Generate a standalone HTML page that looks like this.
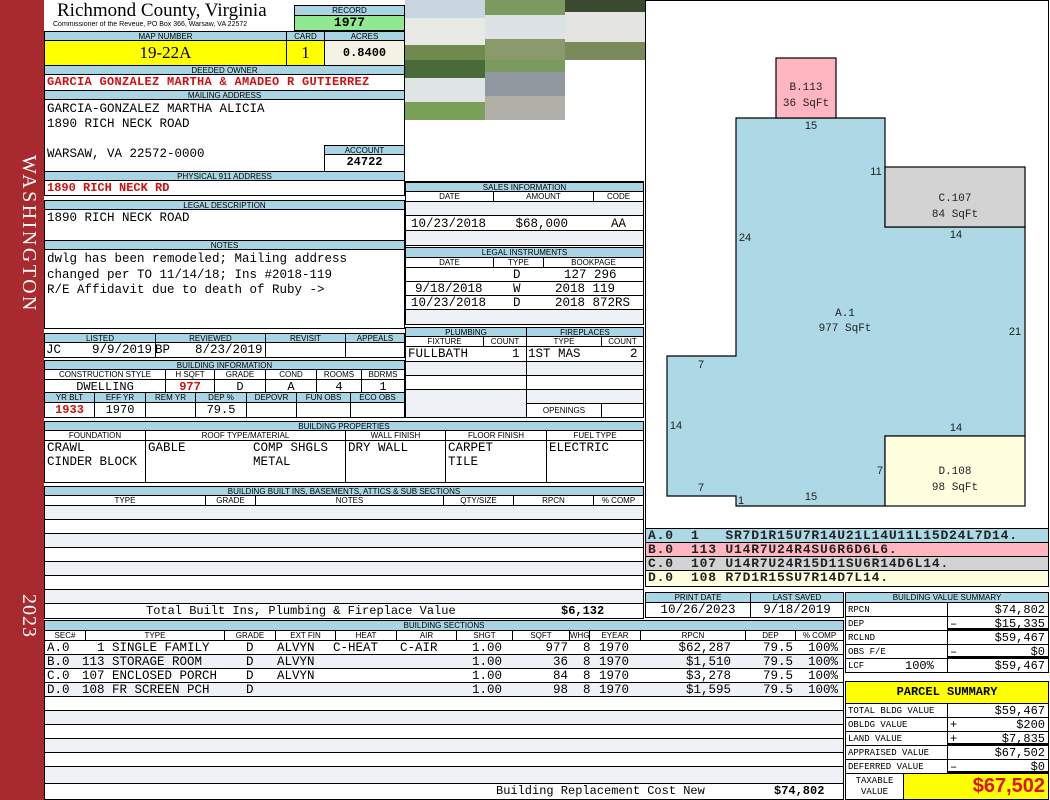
<!DOCTYPE html>
<html><head><meta charset="utf-8"><style>
body{margin:0;width:1050px;height:800px;background:#fff;position:relative;overflow:hidden;font-family:"Liberation Mono",monospace}
div,span.p{position:absolute;box-sizing:border-box;overflow:hidden;white-space:nowrap}
.h{background:#a9d4e4;border:1px solid #000;font:8px/9px "Liberation Sans",sans-serif;text-align:center;color:#000}
.v{border:1px solid #000;font-size:12px;line-height:14px;padding-left:2px;color:#000}
.c{text-align:center;padding-left:0}
.r{text-align:right;padding-right:3px}
.red{color:#d01010;font-weight:bold}
.alt{background:#eef2f6}
.t{font-size:12.5px;line-height:14px}
.sg{position:absolute;left:950px;font-size:12px;line-height:14px}
</style></head><body>
<div style="left:0;top:0;width:44px;height:800px;background:#a8292e"></div>
<div style="left:8px;top:155px;width:32px;height:175px;color:#fff;font:20px 'Liberation Serif',serif;writing-mode:vertical-rl;letter-spacing:2.5px">WASHINGTON</div>
<div style="left:8px;top:594px;width:32px;height:45px;color:#fff;font:20px 'Liberation Serif',serif;writing-mode:vertical-rl;letter-spacing:1px">2023</div>

<div style="left:57px;top:1px;font:19px/20px 'Liberation Serif',serif">Richmond County, Virginia</div>
<div style="left:53px;top:21px;font:7px/8px 'Liberation Sans',sans-serif">Commissioner of the Reveue, PO Box 366, Warsaw, VA 22572</div>
<div class="h" style="left:294px;top:5px;width:111px;height:11px">RECORD</div>
<div class="v c" style="left:294px;top:15px;width:111px;height:16px;background:#90e890;font-weight:bold;font-size:13px">1977</div>
<div class="h" style="left:44px;top:31px;width:243px;height:10px">MAP NUMBER</div>
<div class="h" style="left:286px;top:31px;width:39px;height:10px">CARD</div>
<div class="h" style="left:324px;top:31px;width:81px;height:10px">ACRES</div>
<div class="v c" style="left:44px;top:40px;width:243px;height:26px;background:#ffff00;font:17px/24px 'Liberation Serif',serif">19-22A</div>
<div class="v c" style="left:286px;top:40px;width:39px;height:26px;background:#ffff00;font:17px/24px 'Liberation Serif',serif">1</div>
<div class="v c" style="left:324px;top:40px;width:81px;height:26px;background:#f4f2e4;font-weight:bold;line-height:24px">0.8400</div>
<div class="h" style="left:44px;top:65px;width:361px;height:10px">DEEDED OWNER</div>
<div class="v red" style="left:44px;top:74px;width:361px;height:17px;font-size:12px;letter-spacing:0.3px">GARCIA GONZALEZ MARTHA &amp; AMADEO R GUTIERREZ</div>
<div class="h" style="left:44px;top:90px;width:361px;height:10px">MAILING ADDRESS</div>
<div class="v" style="left:44px;top:99px;width:361px;height:73px;line-height:15px;white-space:pre;padding-top:2px;font-size:12.5px">GARCIA-GONZALEZ MARTHA ALICIA
1890 RICH NECK ROAD

WARSAW, VA 22572-0000</div>
<div class="h" style="left:324px;top:145px;width:81px;height:10px">ACCOUNT</div>
<div class="v c" style="left:324px;top:154px;width:81px;height:18px;font-weight:bold;background:#fff">24722</div>
<div class="h" style="left:44px;top:171px;width:361px;height:10px">PHYSICAL 911 ADDRESS</div>
<div class="v red" style="left:44px;top:180px;width:361px;height:16px">1890 RICH NECK RD</div>
<div class="h" style="left:44px;top:200px;width:361px;height:10px">LEGAL DESCRIPTION</div>
<div class="v" style="left:44px;top:209px;width:361px;height:32px;line-height:17px;font-size:12.5px">1890 RICH NECK ROAD</div>
<div class="h" style="left:44px;top:240px;width:361px;height:10px">NOTES</div>
<div class="v" style="left:44px;top:249px;width:361px;height:80px;line-height:15.5px;white-space:pre;padding-top:2px;font-size:12.5px">dwlg has been remodeled; Mailing address
changed per TO 11/14/18; Ins #2018-119
R/E Affidavit due to death of Ruby -&gt;</div>

<div style="left:405px;top:0;width:80px;height:60px;background:linear-gradient(#c8d4de 0 30%,#e8e8e4 30% 75%,#6f8a4c 75%)"></div>
<div style="left:485px;top:0;width:80px;height:60px;background:linear-gradient(#7a9a60 0 25%,#dde2e6 25% 65%,#8a9a6a 65%)"></div>
<div style="left:565px;top:0;width:80px;height:60px;background:linear-gradient(#3a4a30 0 20%,#e4e4e0 20% 70%,#7a8a5a 70%)"></div>
<div style="left:405px;top:60px;width:80px;height:60px;background:linear-gradient(#4a6a3a 0 30%,#dfe4e4 30% 70%,#7aa05a 70%)"></div>
<div style="left:485px;top:60px;width:80px;height:60px;background:linear-gradient(#7a9a60 0 20%,#9098a0 20% 60%,#b0b0a8 60%)"></div>

<div style="left:405px;top:181px;width:239px;height:67px;border:1px solid #000"></div>
<div class="h" style="left:405px;top:182px;width:239px;height:10px">SALES INFORMATION</div>
<div class="h" style="left:405px;top:191px;width:89px;height:11px;background:#fff">DATE</div>
<div class="h" style="left:493px;top:191px;width:101px;height:11px;background:#fff">AMOUNT</div>
<div class="h" style="left:593px;top:191px;width:51px;height:11px;background:#fff">CODE</div>
<div class="v alt" style="left:405px;top:201px;width:239px;height:15px"></div>
<div class="v" style="left:405px;top:215px;width:239px;height:16px"></div>
<div class="t" style="left:411px;top:217px">10/23/2018</div>
<div class="t" style="left:500px;top:217px;width:68px;text-align:right">$68,000</div>
<div class="t" style="left:611px;top:217px">AA</div>
<div class="v alt" style="left:405px;top:230px;width:239px;height:16px"></div>
<div class="h" style="left:405px;top:247px;width:239px;height:11px">LEGAL INSTRUMENTS</div>
<div class="h" style="left:405px;top:257px;width:89px;height:11px;background:#fff">DATE</div>
<div class="h" style="left:493px;top:257px;width:51px;height:11px;background:#fff">TYPE</div>
<div class="h" style="left:543px;top:257px;width:101px;height:11px;background:#fff">BOOKPAGE</div>
<div class="v" style="left:405px;top:267px;width:239px;height:15px"></div>
<div class="v" style="left:405px;top:281px;width:239px;height:15px"></div>
<div class="v" style="left:405px;top:295px;width:239px;height:15px"></div>
<div class="v alt" style="left:405px;top:309px;width:239px;height:16px"></div>
<div class="t" style="left:513px;top:268px">D</div><div class="t" style="left:564px;top:268px">127 296</div>
<div class="t" style="left:415px;top:282px">9/18/2018</div><div class="t" style="left:513px;top:282px">W</div><div class="t" style="left:555px;top:282px">2018 119</div>
<div class="t" style="left:411px;top:296px">10/23/2018</div><div class="t" style="left:513px;top:296px">D</div><div class="t" style="left:555px;top:296px">2018 872RS</div>

<div class="h" style="left:44px;top:333px;width:112px;height:10px">LISTED</div>
<div class="h" style="left:155px;top:333px;width:111px;height:10px">REVIEWED</div>
<div class="h" style="left:265px;top:333px;width:81px;height:10px">REVISIT</div>
<div class="h" style="left:345px;top:333px;width:60px;height:10px">APPEALS</div>
<div class="v" style="left:44px;top:342px;width:112px;height:16px"></div>
<div class="v" style="left:155px;top:342px;width:111px;height:16px"></div>
<div class="v" style="left:265px;top:342px;width:81px;height:16px"></div>
<div class="v" style="left:345px;top:342px;width:60px;height:16px"></div>
<div class="t" style="left:46px;top:343px">JC</div><div class="t" style="left:92px;top:343px">9/9/2019</div>
<div class="t" style="left:155px;top:343px">BP</div><div class="t" style="left:195px;top:343px">8/23/2019</div>
<div class="h" style="left:44px;top:360px;width:361px;height:10px">BUILDING INFORMATION</div>
<div class="h" style="left:44px;top:369px;width:122px;height:11px;background:#fff">CONSTRUCTION STYLE</div>
<div class="h" style="left:165px;top:369px;width:50px;height:11px;background:#fff">H SQFT</div>
<div class="h" style="left:214px;top:369px;width:52px;height:11px;background:#fff">GRADE</div>
<div class="h" style="left:265px;top:369px;width:52px;height:11px;background:#fff">COND</div>
<div class="h" style="left:316px;top:369px;width:46px;height:11px;background:#fff">ROOMS</div>
<div class="h" style="left:361px;top:369px;width:44px;height:11px;background:#fff">BDRMS</div>
<div class="v c" style="left:44px;top:379px;width:122px;height:14px">DWELLING</div>
<div class="v c red" style="left:165px;top:379px;width:50px;height:14px">977</div>
<div class="v c" style="left:214px;top:379px;width:52px;height:14px">D</div>
<div class="v c" style="left:265px;top:379px;width:52px;height:14px">A</div>
<div class="v c" style="left:316px;top:379px;width:46px;height:14px">4</div>
<div class="v c" style="left:361px;top:379px;width:44px;height:14px">1</div>
<div class="h" style="left:44px;top:392px;width:51px;height:11px">YR BLT</div>
<div class="h" style="left:94px;top:392px;width:52px;height:11px">EFF YR</div>
<div class="h" style="left:145px;top:392px;width:51px;height:11px">REM YR</div>
<div class="h" style="left:195px;top:392px;width:52px;height:11px">DEP %</div>
<div class="h" style="left:246px;top:392px;width:51px;height:11px">DEPOVR</div>
<div class="h" style="left:296px;top:392px;width:55px;height:11px">FUN OBS</div>
<div class="h" style="left:350px;top:392px;width:55px;height:11px">ECO OBS</div>
<div class="v c red" style="left:44px;top:402px;width:51px;height:16px">1933</div>
<div class="v c" style="left:94px;top:402px;width:52px;height:16px">1970</div>
<div class="v" style="left:145px;top:402px;width:51px;height:16px"></div>
<div class="v c" style="left:195px;top:402px;width:52px;height:16px">79.5</div>
<div class="v" style="left:246px;top:402px;width:51px;height:16px"></div>
<div class="v" style="left:296px;top:402px;width:55px;height:16px"></div>
<div class="v" style="left:350px;top:402px;width:55px;height:16px"></div>

<div class="h" style="left:405px;top:327px;width:122px;height:10px">PLUMBING</div>
<div class="h" style="left:526px;top:327px;width:118px;height:10px">FIREPLACES</div>
<div class="h" style="left:405px;top:336px;width:79px;height:11px;background:#fff">FIXTURE</div>
<div class="h" style="left:483px;top:336px;width:44px;height:11px;background:#fff">COUNT</div>
<div class="h" style="left:526px;top:336px;width:76px;height:11px;background:#fff">TYPE</div>
<div class="h" style="left:601px;top:336px;width:43px;height:11px;background:#fff">COUNT</div>
<div class="v" style="left:405px;top:346px;width:122px;height:16px"></div>
<div class="v" style="left:526px;top:346px;width:118px;height:16px"></div>
<div class="t" style="left:408px;top:347px">FULLBATH</div><div class="t" style="left:512px;top:347px">1</div>
<div class="t" style="left:528px;top:347px">1ST MAS</div><div class="t" style="left:630px;top:347px">2</div>
<div class="v alt" style="left:405px;top:361px;width:122px;height:15px"></div>
<div class="v alt" style="left:526px;top:361px;width:118px;height:15px"></div>
<div class="v" style="left:405px;top:375px;width:122px;height:15px"></div>
<div class="v" style="left:526px;top:375px;width:118px;height:15px"></div>
<div class="v alt" style="left:405px;top:389px;width:122px;height:29px"></div>
<div class="v alt" style="left:526px;top:389px;width:118px;height:15px"></div>
<div class="h" style="left:526px;top:403px;width:76px;height:15px;background:#fff;line-height:13px">OPENINGS</div>
<div class="v" style="left:601px;top:403px;width:43px;height:15px"></div>

<div class="h" style="left:44px;top:421px;width:600px;height:10px">BUILDING PROPERTIES</div>
<div class="h" style="left:44px;top:430px;width:102px;height:11px;background:#fff">FOUNDATION</div>
<div class="h" style="left:145px;top:430px;width:201px;height:11px;background:#fff">ROOF TYPE/MATERIAL</div>
<div class="h" style="left:345px;top:430px;width:101px;height:11px;background:#fff">WALL FINISH</div>
<div class="h" style="left:445px;top:430px;width:102px;height:11px;background:#fff">FLOOR FINISH</div>
<div class="h" style="left:546px;top:430px;width:98px;height:11px;background:#fff">FUEL TYPE</div>
<div class="v" style="left:44px;top:440px;width:102px;height:43px;white-space:pre;font-size:12.5px">CRAWL
CINDER BLOCK</div>
<div class="v" style="left:145px;top:440px;width:201px;height:43px;white-space:pre;font-size:12.5px">GABLE         COMP SHGLS
              METAL</div>
<div class="v" style="left:345px;top:440px;width:101px;height:43px;font-size:12.5px">DRY WALL</div>
<div class="v" style="left:445px;top:440px;width:102px;height:43px;white-space:pre;font-size:12.5px">CARPET
TILE</div>
<div class="v" style="left:546px;top:440px;width:98px;height:43px;font-size:12.5px">ELECTRIC</div>

<div class="h" style="left:44px;top:486px;width:600px;height:10px">BUILDING BUILT INS, BASEMENTS, ATTICS &amp; SUB SECTIONS</div>
<div class="h" style="left:44px;top:495px;width:162px;height:11px;background:#fff">TYPE</div>
<div class="h" style="left:205px;top:495px;width:51px;height:11px;background:#fff">GRADE</div>
<div class="h" style="left:255px;top:495px;width:189px;height:11px;background:#fff">NOTES</div>
<div class="h" style="left:443px;top:495px;width:71px;height:11px;background:#fff">QTY/SIZE</div>
<div class="h" style="left:513px;top:495px;width:81px;height:11px;background:#fff">RPCN</div>
<div class="h" style="left:593px;top:495px;width:51px;height:11px;background:#fff">% COMP</div>
<div class="v alt" style="left:44px;top:505px;width:600px;height:15px"></div>
<div class="v" style="left:44px;top:519px;width:600px;height:15px"></div>
<div class="v alt" style="left:44px;top:533px;width:600px;height:15px"></div>
<div class="v" style="left:44px;top:547px;width:600px;height:15px"></div>
<div class="v alt" style="left:44px;top:561px;width:600px;height:15px"></div>
<div class="v" style="left:44px;top:575px;width:600px;height:15px"></div>
<div class="v alt" style="left:44px;top:589px;width:600px;height:15px"></div>
<div class="v" style="left:44px;top:603px;width:600px;height:16px"></div>
<div style="left:146px;top:604px;font-size:12px;line-height:14px">Total Built Ins, Plumbing &amp; Fireplace Value</div>
<div style="left:561px;top:604px;font-size:12px;font-weight:bold;line-height:14px">$6,132</div>

<div class="h" style="left:44px;top:620px;width:800px;height:11px">BUILDING SECTIONS</div>
<div class="h" style="left:44px;top:630px;width:42px;height:11px;background:#fff">SEC#</div>
<div class="h" style="left:85px;top:630px;width:140px;height:11px;background:#fff">TYPE</div>
<div class="h" style="left:224px;top:630px;width:52px;height:11px;background:#fff">GRADE</div>
<div class="h" style="left:275px;top:630px;width:61px;height:11px;background:#fff">EXT FIN</div>
<div class="h" style="left:335px;top:630px;width:62px;height:11px;background:#fff">HEAT</div>
<div class="h" style="left:396px;top:630px;width:61px;height:11px;background:#fff">AIR</div>
<div class="h" style="left:456px;top:630px;width:57px;height:11px;background:#fff">SHGT</div>
<div class="h" style="left:512px;top:630px;width:58px;height:11px;background:#fff">SQFT</div>
<div class="h" style="left:569px;top:630px;width:21px;height:11px;background:#fff">WHGT</div>
<div class="h" style="left:589px;top:630px;width:52px;height:11px;background:#fff">EYEAR</div>
<div class="h" style="left:640px;top:630px;width:106px;height:11px;background:#fff">RPCN</div>
<div class="h" style="left:745px;top:630px;width:51px;height:11px;background:#fff">DEP</div>
<div class="h" style="left:795px;top:630px;width:49px;height:11px;background:#fff">% COMP</div>
<div class="v" style="left:44px;top:640px;width:800px;height:15px"></div>
<div class="v alt" style="left:44px;top:654px;width:800px;height:15px"></div>
<div class="v" style="left:44px;top:668px;width:800px;height:15px"></div>
<div class="v alt" style="left:44px;top:682px;width:800px;height:15px"></div>
<div class="v" style="left:44px;top:696px;width:800px;height:15px"></div>
<div class="v alt" style="left:44px;top:710px;width:800px;height:15px"></div>
<div class="v" style="left:44px;top:724px;width:800px;height:15px"></div>
<div class="v alt" style="left:44px;top:738px;width:800px;height:15px"></div>
<div class="v" style="left:44px;top:752px;width:800px;height:15px"></div>
<div class="v alt" style="left:44px;top:766px;width:800px;height:18px"></div>
<div class="v" style="left:44px;top:783px;width:800px;height:17px"></div>
<div style="left:496px;top:784px;font-size:12px;line-height:15px">Building Replacement Cost New</div>
<div style="left:774px;top:784px;font-size:12px;font-weight:bold;line-height:15px">$74,802</div>

<!-- building section rows -->
<div class="t" style="left:47px;top:641px">A.0</div><div class="t" style="left:97px;top:641px">1 SINGLE FAMILY</div><div class="t" style="left:246px;top:641px">D</div><div class="t" style="left:277px;top:641px">ALVYN</div><div class="t" style="left:333px;top:641px">C-HEAT</div><div class="t" style="left:400px;top:641px">C-AIR</div><div class="t" style="left:472px;top:641px">1.00</div><div class="t" style="left:530px;top:641px;width:38px;text-align:right">977</div><div class="t" style="left:583px;top:641px">8</div><div class="t" style="left:599px;top:641px">1970</div><div class="t" style="left:660px;top:641px;width:71px;text-align:right">$62,287</div><div class="t" style="left:763px;top:641px">79.5</div><div class="t" style="left:808px;top:641px">100%</div>
<div class="t" style="left:47px;top:655px">B.0</div><div class="t" style="left:82px;top:655px">113 STORAGE ROOM</div><div class="t" style="left:246px;top:655px">D</div><div class="t" style="left:277px;top:655px">ALVYN</div><div class="t" style="left:472px;top:655px">1.00</div><div class="t" style="left:530px;top:655px;width:38px;text-align:right">36</div><div class="t" style="left:583px;top:655px">8</div><div class="t" style="left:599px;top:655px">1970</div><div class="t" style="left:660px;top:655px;width:71px;text-align:right">$1,510</div><div class="t" style="left:763px;top:655px">79.5</div><div class="t" style="left:808px;top:655px">100%</div>
<div class="t" style="left:47px;top:669px">C.0</div><div class="t" style="left:82px;top:669px">107 ENCLOSED PORCH</div><div class="t" style="left:246px;top:669px">D</div><div class="t" style="left:277px;top:669px">ALVYN</div><div class="t" style="left:472px;top:669px">1.00</div><div class="t" style="left:530px;top:669px;width:38px;text-align:right">84</div><div class="t" style="left:583px;top:669px">8</div><div class="t" style="left:599px;top:669px">1970</div><div class="t" style="left:660px;top:669px;width:71px;text-align:right">$3,278</div><div class="t" style="left:763px;top:669px">79.5</div><div class="t" style="left:808px;top:669px">100%</div>
<div class="t" style="left:47px;top:683px">D.0</div><div class="t" style="left:82px;top:683px">108 FR SCREEN PCH</div><div class="t" style="left:246px;top:683px">D</div><div class="t" style="left:472px;top:683px">1.00</div><div class="t" style="left:530px;top:683px;width:38px;text-align:right">98</div><div class="t" style="left:583px;top:683px">8</div><div class="t" style="left:599px;top:683px">1970</div><div class="t" style="left:660px;top:683px;width:71px;text-align:right">$1,595</div><div class="t" style="left:763px;top:683px">79.5</div><div class="t" style="left:808px;top:683px">100%</div>

<div style="left:645px;top:0;width:404px;height:529px;border:1px solid #000"></div>
<svg style="position:absolute;left:0;top:0" width="1050" height="529">
<g stroke="#000" stroke-width="1.2">
<path d="M736 118H885V227H1025V436H885V506H736V496H667V356H736Z" fill="#add8e6"/>
<rect x="776" y="58" width="60" height="60" fill="#ffb6c1"/>
<rect x="885" y="167" width="140" height="60" fill="#d3d3d3"/>
<rect x="885" y="436" width="140" height="70" fill="#ffffe0"/>
</g>
<g font-family="Liberation Mono" font-size="11" text-anchor="middle" fill="#222">
<text x="806" y="90">B.113</text><text x="806" y="106">36 SqFt</text>
<text x="955" y="201">C.107</text><text x="955" y="217">84 SqFt</text>
<text x="845" y="316">A.1</text><text x="845" y="331">977 SqFt</text>
<text x="955" y="474">D.108</text><text x="955" y="490">98 SqFt</text>
</g>
<g font-family="Liberation Sans" font-size="11" text-anchor="middle" fill="#222">
<text x="811" y="129">15</text><text x="876" y="175">11</text><text x="745" y="241">24</text>
<text x="956" y="238">14</text><text x="1015" y="335">21</text><text x="701" y="368">7</text>
<text x="676" y="429">14</text><text x="956" y="431">14</text><text x="880" y="474">7</text>
<text x="701" y="491">7</text><text x="811" y="500">15</text><text x="741" y="504">1</text>
</g></svg>

<div class="v" style="left:645px;top:528px;width:404px;height:15px;background:#add8e6;font-size:13px;letter-spacing:0.8px;white-space:pre;font-weight:bold;color:#222">A.0  1   SR7D1R15U7R14U21L14U11L15D24L7D14.</div>
<div class="v" style="left:645px;top:542px;width:404px;height:15px;background:#ffb6c1;font-size:13px;letter-spacing:0.8px;white-space:pre;font-weight:bold;color:#222">B.0  113 U14R7U24R4SU6R6D6L6.</div>
<div class="v" style="left:645px;top:556px;width:404px;height:15px;background:#d3d3d3;font-size:13px;letter-spacing:0.8px;white-space:pre;font-weight:bold;color:#222">C.0  107 U14R7U24R15D11SU6R14D6L14.</div>
<div class="v" style="left:645px;top:570px;width:404px;height:17px;background:#ffffe0;font-size:13px;letter-spacing:0.8px;white-space:pre;font-weight:bold;color:#222">D.0  108 R7D1R15SU7R14D7L14.</div>

<div class="h" style="left:645px;top:592px;width:106px;height:11px">PRINT DATE</div>
<div class="h" style="left:750px;top:592px;width:94px;height:11px">LAST SAVED</div>
<div class="v c" style="left:645px;top:602px;width:106px;height:16px;font-size:12.5px">10/26/2023</div>
<div class="v c" style="left:750px;top:602px;width:94px;height:16px;font-size:12.5px">9/18/2019</div>

<div class="h" style="left:845px;top:592px;width:204px;height:11px">BUILDING VALUE SUMMARY</div>
<div class="v" style="left:845px;top:602px;width:103px;height:15px;font-size:9px">RPCN</div><div class="v r" style="left:947px;top:602px;width:102px;height:15px">$74,802</div>
<div class="v" style="left:845px;top:616px;width:103px;height:15px;font-size:9px">DEP</div><div class="v r" style="left:947px;top:616px;width:102px;height:15px;border-bottom:3px solid #000">$15,335</div><div class="sg" style="top:617px">–</div>
<div class="v" style="left:845px;top:630px;width:103px;height:15px;font-size:9px">RCLND</div><div class="v r" style="left:947px;top:630px;width:102px;height:15px">$59,467</div>
<div class="v" style="left:845px;top:644px;width:103px;height:15px;font-size:9px">OBS F/E</div><div class="v r" style="left:947px;top:644px;width:102px;height:15px;border-bottom:3px solid #000">$0</div><div class="sg" style="top:645px">–</div>
<div class="v" style="left:845px;top:658px;width:103px;height:15px;font-size:9px">LCF</div><div class="t" style="left:905px;top:659px;font-size:12px">100%</div><div class="v r" style="left:947px;top:658px;width:102px;height:15px">$59,467</div>

<div class="v c" style="left:845px;top:681px;width:204px;height:23px;background:#ffff00;font-weight:bold;font-size:12px;line-height:20px">PARCEL SUMMARY</div>
<div class="v" style="left:845px;top:703px;width:103px;height:15px;font-size:9px">TOTAL BLDG VALUE</div><div class="v r" style="left:947px;top:703px;width:102px;height:15px">$59,467</div>
<div class="v" style="left:845px;top:717px;width:103px;height:15px;font-size:9px">OBLDG VALUE</div><div class="v r" style="left:947px;top:717px;width:102px;height:15px">$200</div><div class="sg" style="top:718px">+</div>
<div class="v" style="left:845px;top:731px;width:103px;height:15px;font-size:9px">LAND VALUE</div><div class="v r" style="left:947px;top:731px;width:102px;height:15px;border-bottom:3px solid #000">$7,835</div><div class="sg" style="top:732px">+</div>
<div class="v" style="left:845px;top:745px;width:103px;height:15px;font-size:9px">APPRAISED VALUE</div><div class="v r" style="left:947px;top:745px;width:102px;height:15px">$67,502</div>
<div class="v" style="left:845px;top:759px;width:103px;height:15px;font-size:9px">DEFERRED VALUE</div><div class="v r" style="left:947px;top:759px;width:102px;height:15px;border-bottom:3px solid #000">$0</div><div class="sg" style="top:760px">–</div>
<div class="v c" style="left:845px;top:773px;width:59px;height:27px;font-size:9px;line-height:11px;white-space:pre;padding-top:2px">TAXABLE
VALUE</div>
<div class="v r" style="left:903px;top:773px;width:146px;height:27px;background:#ffff00;color:#e01010;font:bold 20px/25px 'Liberation Sans',sans-serif">$67,502</div>
</body></html>
